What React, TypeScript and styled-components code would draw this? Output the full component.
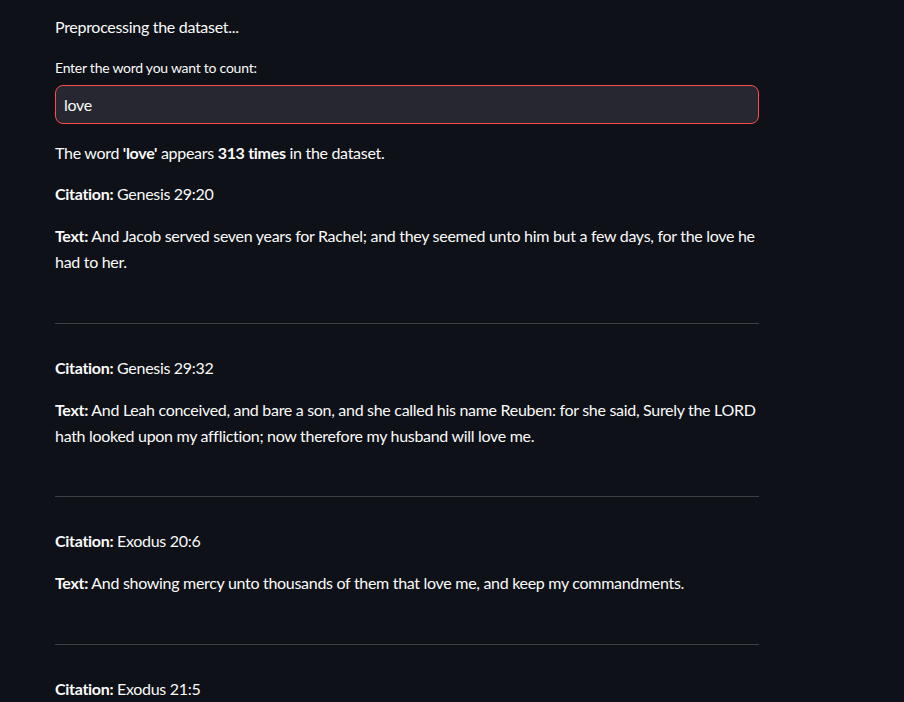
import React from "react";
import styled, { createGlobalStyle } from "styled-components";

const Global = createGlobalStyle`
  html, body { margin: 0; padding: 0; background: #0e1117; }
  body { font-family: "Lato", "Liberation Sans", sans-serif; color: #fafafa; }
`;

const Page = styled.div`
  min-height: 702px;
  background: #0e1117;
  padding: 14px 0 0 55px;
  box-sizing: border-box;
  overflow: hidden;
`;

const Column = styled.main`
  width: 704px;
  display: flex;
  flex-direction: column;
`;

const Para = styled.p<{ $top?: number }>`
  margin: ${(p) => p.$top ?? 16}px 0 0 0;
  font-size: 16px;
  line-height: 25.6px;
  letter-spacing: -0.3px;
  color: #fafafa;
  b { font-weight: 700; }
`;

const Label = styled.label`
  margin-top: 17px;
  font-size: 14px;
  line-height: 21px;
  letter-spacing: -0.25px;
  color: #fafafa;
`;

const Input = styled.input`
  margin-top: 7px;
  height: 39px;
  box-sizing: border-box;
  border: 1px solid #ff4b4b;
  border-radius: 8px;
  background: #262730;
  color: #fafafa;
  font-family: inherit;
  font-size: 16px;
  letter-spacing: -0.3px;
  padding: 0 8px;
  outline: none;
`;

const Rule = styled.hr`
  margin: 48px 0 0 0;
  border: none;
  border-bottom: 1px solid rgba(250, 250, 250, 0.2);
  height: 0;
`;

const results = [
  {
    cite: "Genesis 29:20",
    text: "And Jacob served seven years for Rachel; and they seemed unto him but a few days, for the love he had to her.",
  },
  {
    cite: "Genesis 29:32",
    text: "And Leah conceived, and bare a son, and she called his name Reuben: for she said, Surely the LORD hath looked upon my affliction; now therefore my husband will love me.",
  },
  {
    cite: "Exodus 20:6",
    text: "And showing mercy unto thousands of them that love me, and keep my commandments.",
  },
  {
    cite: "Exodus 21:5",
    text: "And if the servant shall plainly say, I love my master, my wife, and my children; I will not go out free:",
  },
];

export default function App() {
  return (
    <>
      <Global />
      <Page>
        <Column>
          <Para $top={0}>Preprocessing the dataset...</Para>
          <Label htmlFor="word">Enter the word you want to count:</Label>
          <Input id="word" defaultValue="love" />
          <Para>
            The word <b>'love'</b> appears <b>313 times</b> in the dataset.
          </Para>
          {results.map((r, i) => (
            <React.Fragment key={r.cite}>
              <Para $top={i === 0 ? 16 : 31}>
                <b>Citation:</b> {r.cite}
              </Para>
              <Para $top={16.7}>
                <b>Text:</b> {r.text}
              </Para>
              <Rule />
            </React.Fragment>
          ))}
        </Column>
      </Page>
    </>
  );
}
